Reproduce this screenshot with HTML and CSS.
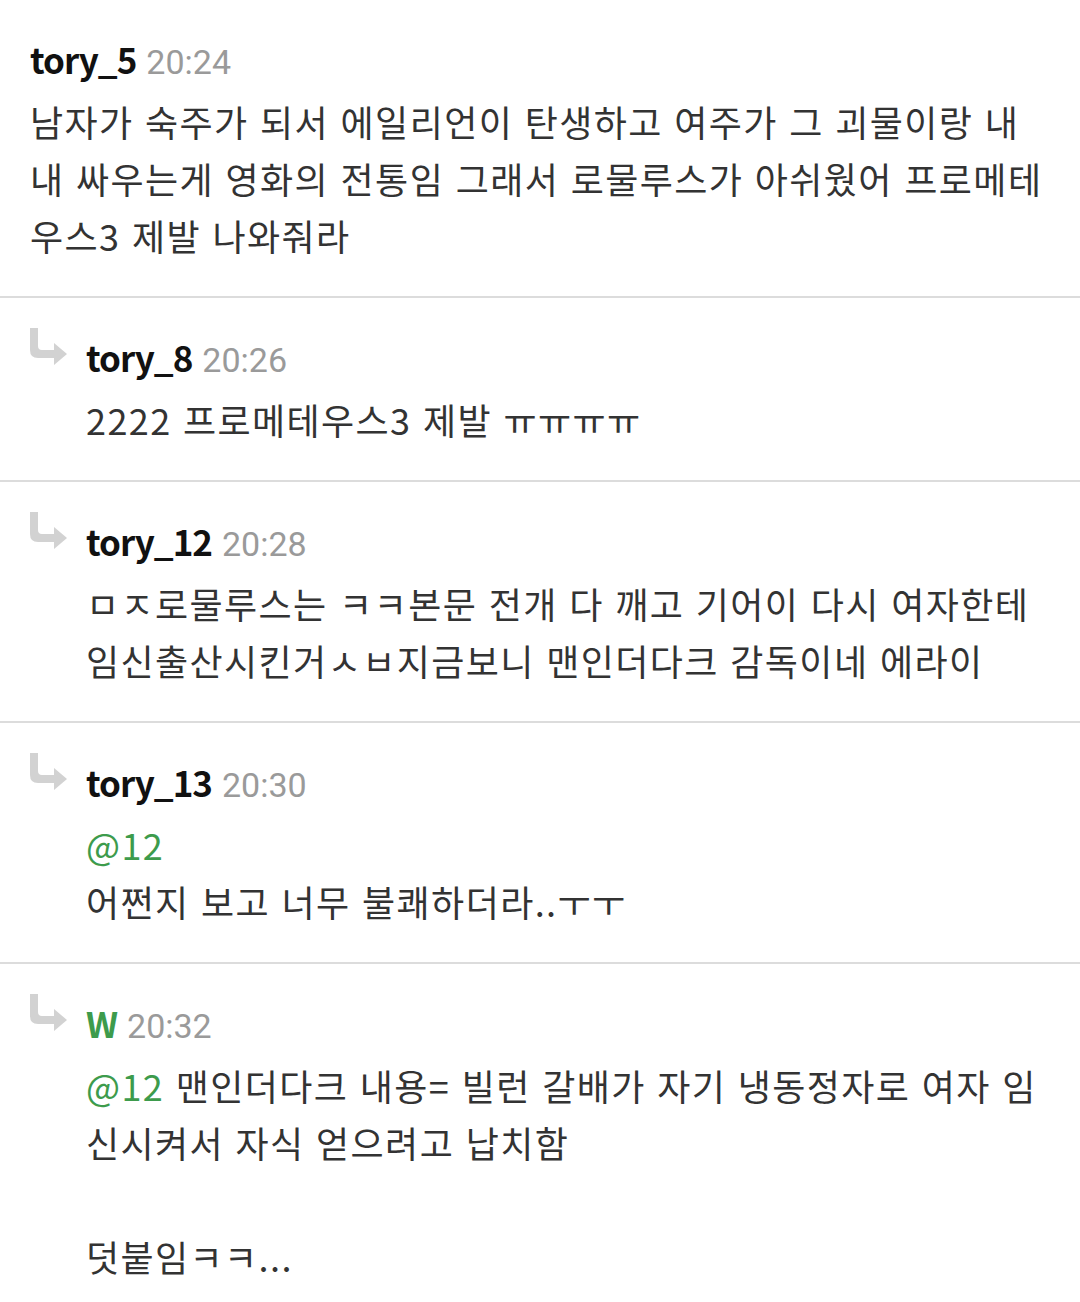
FILE: index.html
```html
<!DOCTYPE html>
<html lang="ko">
<head>
  <meta charset="UTF-8">
  <title>댓글</title>
  <link rel="stylesheet" href="styles.css">
</head>
<body>
  <div class="comments">

    <div class="comment">
      <div class="content">
        <div class="head"><span class="name">tory_5</span><span class="time">20:24</span></div>
        <div class="text">남자가 숙주가 되서 에일리언이 탄생하고 여주가 그 괴물이랑 내내 싸우는게 영화의 전통임 그래서 로물루스가 아쉬웠어 프로메테우스3 제발 나와줘라</div>
      </div>
    </div>

    <div class="comment reply">
      <svg class="arrow" viewBox="0 0 40 40"><path d="M0 0h8v18q0 4 4 4h12v-7l13 11l-13 11v-7h-16q-8 0-8-8z"/></svg>
      <div class="content">
        <div class="head"><span class="name">tory_8</span><span class="time">20:26</span></div>
        <div class="text">2222 프로메테우스3 제발 ㅠㅠㅠㅠ</div>
      </div>
    </div>

    <div class="comment reply">
      <svg class="arrow" viewBox="0 0 40 40"><path d="M0 0h8v18q0 4 4 4h12v-7l13 11l-13 11v-7h-16q-8 0-8-8z"/></svg>
      <div class="content">
        <div class="head"><span class="name">tory_12</span><span class="time">20:28</span></div>
        <div class="text">ㅁㅈ로물루스는 ㅋㅋ본문 전개 다 깨고 기어이 다시 여자한테 임신출산시킨거ㅅㅂ지금보니 맨인더다크 감독이네 에라이</div>
      </div>
    </div>

    <div class="comment reply">
      <svg class="arrow" viewBox="0 0 40 40"><path d="M0 0h8v18q0 4 4 4h12v-7l13 11l-13 11v-7h-16q-8 0-8-8z"/></svg>
      <div class="content">
        <div class="head"><span class="name">tory_13</span><span class="time">20:30</span></div>
        <div class="text"><span class="mention">@12</span><br>어쩐지 보고 너무 불쾌하더라..ㅜㅜ</div>
      </div>
    </div>

    <div class="comment reply">
      <svg class="arrow" viewBox="0 0 40 40"><path d="M0 0h8v18q0 4 4 4h12v-7l13 11l-13 11v-7h-16q-8 0-8-8z"/></svg>
      <div class="content">
        <div class="head"><span class="name writer">W</span><span class="time">20:32</span></div>
        <div class="text"><span class="mention">@12</span> 맨인더다크 내용= 빌런 갈배가 자기 냉동정자로 여자 임신시켜서 자식 얻으려고 납치함<br><br>덧붙임ㅋㅋ...</div>
      </div>
    </div>

  </div>
</body>
</html>
```

FILE: styles.css
```css
body {
  margin: 0;
  padding: 0;
  background-color: #fff;
  font-family: "Noto Sans CJK KR", "Noto Sans", sans-serif;
  color: #333;
}

.comments {
  width: 1080px;
}

.comment {
  display: flex;
  padding: 25px 30px 32px 30px;
  border-bottom: 2px solid #dcdcdc;
}

.comment:last-child {
  border-bottom: none;
}

.content {
  flex: 1;
  min-width: 0;
}

.arrow {
  width: 40px;
  height: 40px;
  margin-top: 5px;
  margin-right: 16px;
  flex-shrink: 0;
  fill: #d2d2d2;
}

.head {
  height: 68px;
  line-height: 68px;
  white-space: nowrap;
}

.name {
  font-size: 35px;
  font-weight: bold;
  color: #111;
  letter-spacing: -1px;
}

.name.writer {
  color: #3d9b4c;
}

.time {
  margin-left: 10px;
  font-family: Roboto, "Noto Sans", sans-serif;
  font-size: 34px;
  color: #9a9a9a;
}

.text {
  font-size: 36px;
  line-height: 57px;
  letter-spacing: 1.4px;
}

.mention {
  color: #3d9b4c;
}
```
